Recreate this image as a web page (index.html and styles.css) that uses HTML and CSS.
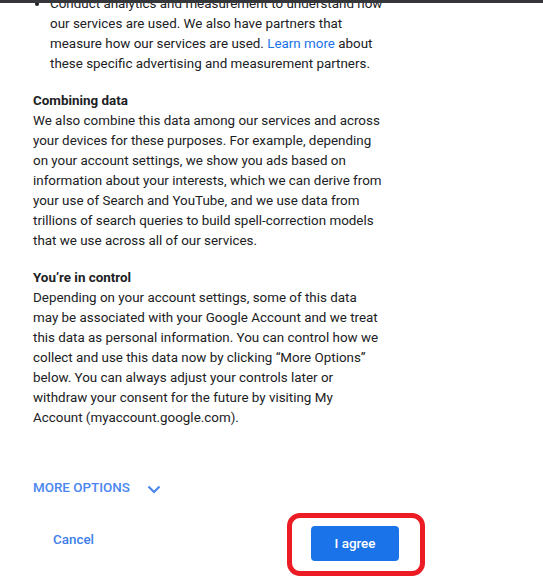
FILE: index.html
```html
<!DOCTYPE html>
<html lang="en">
<head>
<meta charset="utf-8">
<title>Consent</title>
<link rel="stylesheet" href="styles.css">
</head>
<body>
<div class="topbar"></div>
<div class="viewport">
  <div class="content">
    <ul class="list">
      <li>Conduct analytics and measurement to understand how our services are used. We also have partners that measure how our services are used. <a class="link" href="#">Learn more</a> about these specific advertising and measurement partners.</li>
    </ul>
    <section class="block">
      <h3 class="heading">Combining data</h3>
      <p class="para">We also combine this data among our services and across your devices for these purposes. For example, depending on your account settings, we show you ads based on information about your interests, which we can derive from your use of Search and YouTube, and we use data from trillions of search queries to build spell-correction models that we use across all of our services.</p>
    </section>
    <section class="block">
      <h3 class="heading">You’re in control</h3>
      <p class="para">Depending on your account settings, some of this data may be associated with your Google Account and we treat this data as personal information. You can control how we collect and use this data now by clicking “More Options” below. You can always adjust your controls later or withdraw your consent for the future by visiting My Account (myaccount.google.com).</p>
    </section>
    <div class="more">
      <span class="more-label">MORE OPTIONS</span>
      <svg class="chev" width="14" height="9" viewBox="0 0 14 9"><path d="M1.5 1.5 L7 7 L12.5 1.5" fill="none" stroke="#4a86f0" stroke-width="2.2"/></svg>
    </div>
    <div class="actions">
      <button class="btn-text">Cancel</button>
      <div class="mark">
        <button class="btn-primary">I agree</button>
      </div>
    </div>
  </div>
</div>
</body>
</html>
```

FILE: styles.css
```css
html, body {
  margin: 0;
  padding: 0;
  background: #ffffff;
}
body {
  font-family: Roboto, "Liberation Sans", sans-serif;
  font-size: 13.4px;
  line-height: 20px;
  color: #202124;
  width: 543px;
  height: 588px;
  overflow: hidden;
}
.topbar {
  height: 3px;
  background: #36373b;
}
.viewport {
  height: 585px;
  overflow: hidden;
}
.content {
  margin-top: -9px;
  padding-left: 33px;
  width: 352px;
}
.list {
  margin: 0;
  padding-left: 17px;
}
.link {
  color: #1a73e8;
  text-decoration: none;
}
.block {
  margin-top: 17px;
}
.heading {
  margin: 0;
  font-size: 13.4px;
  font-weight: 700;
  line-height: 20px;
  color: #202124;
}
.para {
  margin: 0;
}
.more {
  display: flex;
  align-items: center;
  margin-top: 50px;
  height: 20px;
}
.more-label {
  color: #4a86f0;
  font-weight: 500;
  font-size: 13.4px;
  flex-shrink: 0;
}
.chev {
  margin-left: 17px;
  margin-top: 3px;
}
.actions {
  display: flex;
  align-items: center;
  margin-top: 15px;
}
.btn-text {
  font-family: inherit;
  background: none;
  border: none;
  padding: 8px 20px;
  margin-top: -10px;
  font-size: 13.4px;
  font-weight: 500;
  color: #3d7ee9;
  line-height: 20px;
}
.mark {
  margin-left: 173px;
  border: 5px solid #ed1c24;
  border-radius: 13px;
  padding: 8px 21px 10px 19px;
  flex-shrink: 0;
}
.btn-primary {
  display: block;
  font-family: inherit;
  width: 88px;
  height: 35px;
  border: none;
  border-radius: 4px;
  background: #1a73e8;
  color: #ffffff;
  font-size: 13.4px;
  font-weight: 500;
  padding: 0;
}
```
